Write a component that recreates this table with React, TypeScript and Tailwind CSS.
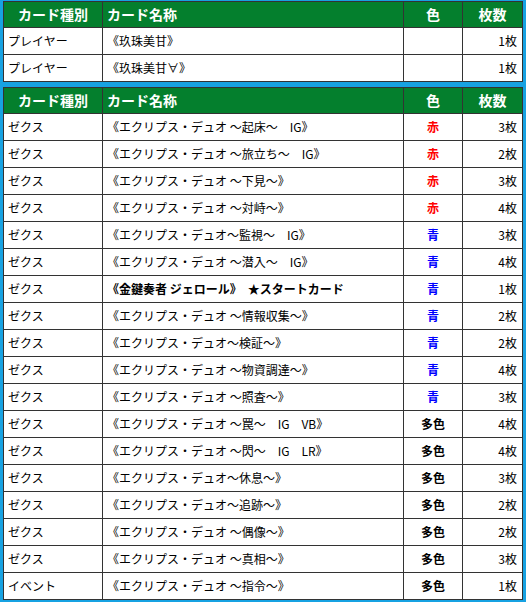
import React from "react";

type Row = {
  kind: string;
  name: string;
  color: string;
  count: string;
  bold?: boolean;
};

const players: Row[] = [
  { kind: "プレイヤー", name: "《玖珠美甘》", color: "", count: "1枚" },
  { kind: "プレイヤー", name: "《玖珠美甘∀》", color: "", count: "1枚" },
];

const deck: Row[] = [
  { kind: "ゼクス", name: "《エクリプス・デュオ ～起床～　IG》", color: "赤", count: "3枚" },
  { kind: "ゼクス", name: "《エクリプス・デュオ ～旅立ち～　IG》", color: "赤", count: "2枚" },
  { kind: "ゼクス", name: "《エクリプス・デュオ ～下見～》", color: "赤", count: "3枚" },
  { kind: "ゼクス", name: "《エクリプス・デュオ ～対峙～》", color: "赤", count: "4枚" },
  { kind: "ゼクス", name: "《エクリプス・デュオ～監視～　IG》", color: "青", count: "3枚" },
  { kind: "ゼクス", name: "《エクリプス・デュオ ～潜入～　IG》", color: "青", count: "4枚" },
  { kind: "ゼクス", name: "《金鍵奏者 ジェロール》　★スタートカード", color: "青", count: "1枚", bold: true },
  { kind: "ゼクス", name: "《エクリプス・デュオ ～情報収集～》", color: "青", count: "2枚" },
  { kind: "ゼクス", name: "《エクリプス・デュオ～検証～》", color: "青", count: "2枚" },
  { kind: "ゼクス", name: "《エクリプス・デュオ ～物資調達～》", color: "青", count: "4枚" },
  { kind: "ゼクス", name: "《エクリプス・デュオ ～照査～》", color: "青", count: "3枚" },
  { kind: "ゼクス", name: "《エクリプス・デュオ ～罠～　IG　VB》", color: "多色", count: "4枚" },
  { kind: "ゼクス", name: "《エクリプス・デュオ ～閃～　IG　LR》", color: "多色", count: "4枚" },
  { kind: "ゼクス", name: "《エクリプス・デュオ～休息～》", color: "多色", count: "3枚" },
  { kind: "ゼクス", name: "《エクリプス・デュオ～追跡～》", color: "多色", count: "2枚" },
  { kind: "ゼクス", name: "《エクリプス・デュオ ～偶像～》", color: "多色", count: "2枚" },
  { kind: "ゼクス", name: "《エクリプス・デュオ ～真相～》", color: "多色", count: "3枚" },
  { kind: "イベント", name: "《エクリプス・デュオ ～指令～》", color: "多色", count: "1枚" },
];

function colorClass(c: string) {
  if (c === "赤") return "text-[#ff0000]";
  if (c === "青") return "text-[#0000ff]";
  return "text-black";
}

function CardTable({ rows }: { rows: Row[] }) {
  return (
    <table className="table-fixed w-[519px] border-collapse bg-white text-[12px] text-black">
      <colgroup>
        <col className="w-[99px]" />
        <col className="w-[301px]" />
        <col className="w-[59px]" />
        <col className="w-[60px]" />
      </colgroup>
      <thead>
        <tr className="bg-[#047f2d] text-white text-[14px] font-bold">
          <th className="h-[26px] border border-[#333] text-center">カード種別</th>
          <th className="h-[26px] border border-[#333] text-left pl-[4px]">カード名称</th>
          <th className="h-[26px] border border-[#333] text-center">色</th>
          <th className="h-[26px] border border-[#333] text-center">枚数</th>
        </tr>
      </thead>
      <tbody>
        {rows.map((r, i) => (
          <tr key={i}>
            <td className="h-[27px] border border-[#333] pl-[4px] whitespace-nowrap">{r.kind}</td>
            <td className={`h-[27px] border border-[#333] pl-[4px] whitespace-nowrap ${r.bold ? "font-bold" : ""}`}>
              {r.name}
            </td>
            <td className={`h-[27px] border border-[#333] text-center font-bold ${colorClass(r.color)}`}>
              {r.color}
            </td>
            <td className="h-[27px] border border-[#333] text-right pr-[5px]">{r.count}</td>
          </tr>
        ))}
      </tbody>
    </table>
  );
}

export default function App() {
  return (
    <div
      className="min-h-[602px] bg-[#17a2e2] pt-[1px] pl-[3px]"
      style={{ fontFamily: '"Noto Sans CJK JP", "Noto Sans", sans-serif' }}
    >
      <CardTable rows={players} />
      <div className="mt-[5px]">
        <CardTable rows={deck} />
      </div>
    </div>
  );
}
